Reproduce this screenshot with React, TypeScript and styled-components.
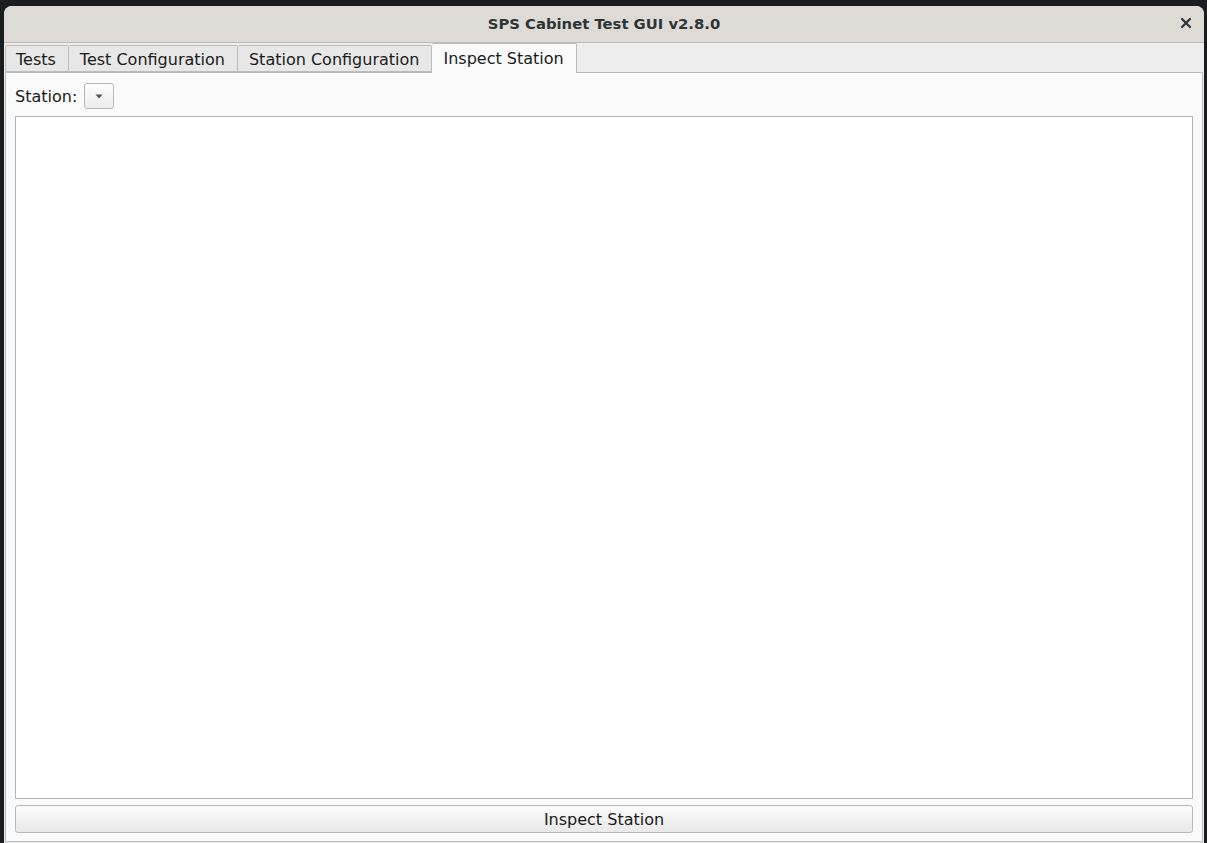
import { useState } from 'react';
import styled, { createGlobalStyle } from 'styled-components';

const GlobalStyle = createGlobalStyle`
    html, body {
        margin: 0;
        padding: 0;
        background: #1b1e21;
        overflow: hidden;
    }
    body {
        font-family: "DejaVu Sans", "Liberation Sans", sans-serif;
    }
`;

const tabs = ['Tests', 'Test Configuration', 'Station Configuration', 'Inspect Station'];

const App = () => {
    const [active, setActive] = useState(3);

    return (
        <>
            <GlobalStyle />
            <Desktop>
                <Window>
                    <TitleBar>
                        <Title>SPS Cabinet Test GUI v2.8.0</Title>
                        <CloseButton aria-label="close">
                            <svg width="12" height="12" viewBox="0 0 12 12">
                                <path d="M2 2 L10 10 M10 2 L2 10" stroke="#2e3436" strokeWidth="2.2" strokeLinecap="round" />
                            </svg>
                        </CloseButton>
                    </TitleBar>
                    <TabBar>
                        {tabs.map((t, i) => (
                            <Tab key={t} $active={i === active} onClick={() => setActive(i)}>
                                {t}
                            </Tab>
                        ))}
                    </TabBar>
                    <Pane>
                        <StationRow>
                            <Label>Station:</Label>
                            <Combo>
                                <svg width="8" height="5" viewBox="0 0 8 5">
                                    <path d="M0.5 0.5 L7.5 0.5 L4 4.5 Z" fill="#555" />
                                </svg>
                            </Combo>
                        </StationRow>
                        <Output readOnly />
                        <ActionButton>Inspect Station</ActionButton>
                    </Pane>
                </Window>
            </Desktop>
        </>
    );
};

export default App;

const Desktop = styled.div`
    width: 1207px;
    height: 843px;
    padding: 6px 0 0 4px;
    box-sizing: border-box;
`;

const Window = styled.div`
    width: 1200px;
    height: 850px;
    display: flex;
    flex-direction: column;
    background: #ededed;
    border-radius: 8px 8px 0 0;
    overflow: hidden;
`;

const TitleBar = styled.div`
    position: relative;
    height: 36px;
    flex: none;
    display: flex;
    align-items: center;
    justify-content: center;
    background: #dedbd7;
    border-bottom: 1px solid #bdbab6;
`;

const Title = styled.div`
    font-weight: bold;
    font-size: 14.8px;
    color: #2e3436;
    padding-bottom: 1px;
`;

const CloseButton = styled.div`
    position: absolute;
    right: 12px;
    top: 11px;
    width: 12px;
    height: 12px;
    display: flex;
`;

const TabBar = styled.div`
    height: 29px;
    flex: none;
    display: flex;
    align-items: flex-end;
    padding-left: 1px;
    background: #ededed;
`;

const Tab = styled.div<{ $active: boolean }>`
    height: ${p => (p.$active ? '30px' : '27px')};
    box-sizing: border-box;
    padding: ${p => (p.$active ? '0 12px 1px 11px' : '1px 12px 0 11px')};
    margin-bottom: ${p => (p.$active ? '-1px' : '0')};
    display: flex;
    align-items: center;
    font-size: 16px;
    color: #1a1a1a;
    background: ${p => (p.$active ? '#fafafa' : '#e8e8e8')};
    border: 1px solid #bcbcbc;
    border-bottom: ${p => (p.$active ? 'none' : '1px solid #bcbcbc')};
    border-radius: 2px 2px 0 0;
    cursor: default;
    position: relative;
    z-index: ${p => (p.$active ? 1 : 0)};
    &:first-child {
        padding-left: 10px;
        padding-right: 12px;
    }
    & + & {
        border-left: none;
    }
`;

const Pane = styled.div`
    flex: none;
    display: flex;
    flex-direction: column;
    background: #fafafa;
    border: 1px solid #bcbcbc;
    margin: 0 1px;
    padding: 10px 9px 9px 9px;
    box-sizing: border-box;
    height: 770px;
`;

const StationRow = styled.div`
    display: flex;
    align-items: center;
    gap: 7px;
    height: 26px;
    flex: none;
`;

const Label = styled.div`
    font-size: 16px;
    color: #1a1a1a;
`;

const Combo = styled.div`
    width: 30px;
    height: 26px;
    box-sizing: border-box;
    border: 1px solid #b8b8b8;
    border-radius: 3px;
    background: linear-gradient(#fdfdfd, #ececec);
    display: flex;
    align-items: center;
    justify-content: center;
    padding-top: 1px;
`;

const Output = styled.textarea`
    flex: none;
    height: 683px;
    margin-top: 7px;
    resize: none;
    border: 1px solid #b4b4b4;
    background: #ffffff;
    outline: none;
    box-sizing: border-box;
`;

const ActionButton = styled.button`
    flex: none;
    height: 28px;
    margin-top: 6px;
    box-sizing: border-box;
    border: 1px solid #b8b8b8;
    border-radius: 3px;
    background: linear-gradient(#fbfbfb, #e9e9e9);
    font-family: "DejaVu Sans", "Liberation Sans", sans-serif;
    font-size: 16px;
    color: #1a1a1a;
    padding: 0;
`;
